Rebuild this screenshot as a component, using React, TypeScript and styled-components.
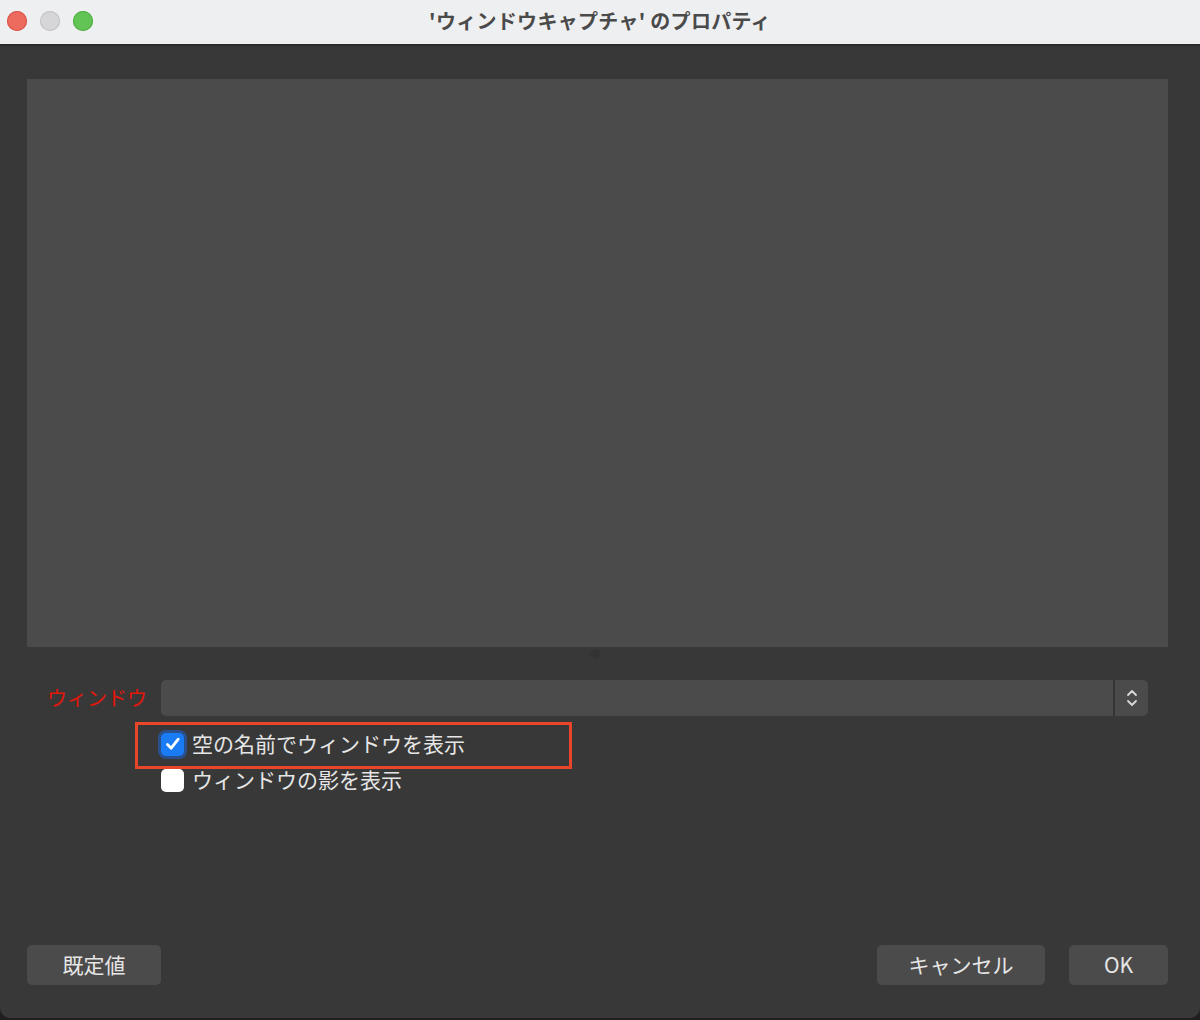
import styled, { createGlobalStyle } from "styled-components";

const GlobalStyle = createGlobalStyle`
  html, body {
    margin: 0;
    padding: 0;
    background: #1f1f1f;
  }
  body {
    font-family: "Noto Sans CJK JP", "Noto Sans", sans-serif;
  }
`;

function App() {
  return (
    <>
      <GlobalStyle />
      <Window>
        <TitleBar>
          <Lights>
            <Light color="#ed6a5e" border="#d6574c" />
            <Light color="#d6d6d8" border="#c2c2c4" />
            <Light color="#61c454" border="#52ac46" />
          </Lights>
          <Title>'ウィンドウキャプチャ' のプロパティ</Title>
        </TitleBar>
        <Body>
          <Preview />
          <Splitter>
            <SplitHandle />
          </Splitter>
          <Form>
            <Label>ウィンドウ</Label>
            <Combo>
              <ComboField />
              <Stepper>
                <svg width="14" height="22" viewBox="0 0 14 22" fill="none">
                  <path
                    d="M3 8 L7 4 L11 8"
                    stroke="#d8d8d8"
                    strokeWidth="1.8"
                    strokeLinecap="round"
                    strokeLinejoin="round"
                  />
                  <path
                    d="M3 14 L7 18 L11 14"
                    stroke="#d8d8d8"
                    strokeWidth="1.8"
                    strokeLinecap="round"
                    strokeLinejoin="round"
                  />
                </svg>
              </Stepper>
            </Combo>
            <span />
            <CheckList>
              <CheckRow>
                <Highlight />
                <Box checked>
                  <svg width="20" height="20" viewBox="0 0 20 20" fill="none">
                    <path
                      d="M4.5 10.5 L8.2 14.2 L15.2 5.2"
                      stroke="#ffffff"
                      strokeWidth="2.8"
                      strokeLinecap="round"
                      strokeLinejoin="round"
                    />
                  </svg>
                </Box>
                <CheckText>空の名前でウィンドウを表示</CheckText>
              </CheckRow>
              <CheckRow>
                <Box />
                <CheckText>ウィンドウの影を表示</CheckText>
              </CheckRow>
            </CheckList>
          </Form>
          <Spacer />
          <Footer>
            <Button w="134px">既定値</Button>
            <FooterRight>
              <Button w="168px">キャンセル</Button>
              <Button w="99px">OK</Button>
            </FooterRight>
          </Footer>
        </Body>
      </Window>
    </>
  );
}

export default App;

const Window = styled.div`
  width: 1200px;
  height: 1018px;
  display: flex;
  flex-direction: column;
  background: #383838;
  border-radius: 0 0 10px 10px;
  overflow: hidden;
`;

const TitleBar = styled.div`
  position: relative;
  height: 44px;
  flex-shrink: 0;
  display: flex;
  align-items: center;
  justify-content: center;
  background: #eeeff1;
  border-bottom: 2px solid #2b2b2b;
`;

const Lights = styled.div`
  position: absolute;
  left: 7px;
  top: 11px;
  display: flex;
  gap: 13px;
`;

const Light = styled.span<{ color: string; border: string }>`
  width: 20px;
  height: 20px;
  border-radius: 50%;
  background: ${(p) => p.color};
  box-shadow: inset 0 0 0 1px ${(p) => p.border};
`;

const Title = styled.div`
  font-size: 20px;
  font-weight: 700;
  color: #4a4a4a;
  letter-spacing: 0.3px;
  margin-top: -3px;
`;

const Body = styled.div`
  flex: 1;
  display: flex;
  flex-direction: column;
  padding: 33px 32px 33px 27px;
`;

const Preview = styled.div`
  height: 568px;
  background: #4b4b4b;
`;

const Splitter = styled.div`
  height: 33px;
  display: flex;
  justify-content: center;
  align-items: flex-start;
`;

const SplitHandle = styled.span`
  margin-top: 2px;
  width: 10px;
  height: 10px;
  border-radius: 50%;
  background: #333333;
  margin-left: -6px;
`;

const Form = styled.div`
  display: grid;
  grid-template-columns: 120px 1fr;
  column-gap: 14px;
  row-gap: 16px;
  padding-right: 20px;
`;

const Label = styled.div`
  color: #e3170a;
  font-size: 20px;
  text-align: right;
  align-self: center;
  line-height: 36px;
`;

const Combo = styled.div`
  display: flex;
  height: 36px;
  border-radius: 5px;
  overflow: hidden;
  gap: 2px;
  background: #353535;
`;

const ComboField = styled.div`
  flex: 1;
  background: #4b4b4b;
`;

const Stepper = styled.div`
  width: 33px;
  display: flex;
  align-items: center;
  justify-content: center;
  background: #4b4b4b;
`;

const CheckList = styled.div`
  display: flex;
  flex-direction: column;
  gap: 12px;
`;

const CheckRow = styled.div`
  position: relative;
  display: flex;
  align-items: center;
  gap: 8px;
  height: 24px;
`;

const Highlight = styled.div`
  position: absolute;
  left: -26px;
  top: -10px;
  width: 431px;
  height: 41px;
  border: 3px solid #ea4429;
  pointer-events: none;
`;

const Box = styled.span<{ checked?: boolean }>`
  width: 23px;
  height: 23px;
  border-radius: 5px;
  display: flex;
  align-items: center;
  justify-content: center;
  background: ${(p) => (p.checked ? "#1a7cf5" : "#ffffff")};
  box-shadow: ${(p) =>
    p.checked ? "0 0 0 3px rgba(30, 100, 210, 0.55)" : "none"};
`;

const CheckText = styled.span`
  color: #e6e6e6;
  font-size: 21px;
  line-height: 24px;
  margin-top: -3px;
`;

const Spacer = styled.div`
  flex: 1;
`;

const Footer = styled.div`
  display: flex;
  justify-content: space-between;
  align-items: center;
`;

const FooterRight = styled.div`
  display: flex;
  gap: 24px;
`;

const Button = styled.button<{ w: string }>`
  width: ${(p) => p.w};
  height: 40px;
  border: none;
  border-radius: 5px;
  background: #4b4b4b;
  color: #e6e6e6;
  font-family: "Noto Sans CJK JP", "Noto Sans", sans-serif;
  font-size: 21px;
  padding: 0 0 2px;
`;
